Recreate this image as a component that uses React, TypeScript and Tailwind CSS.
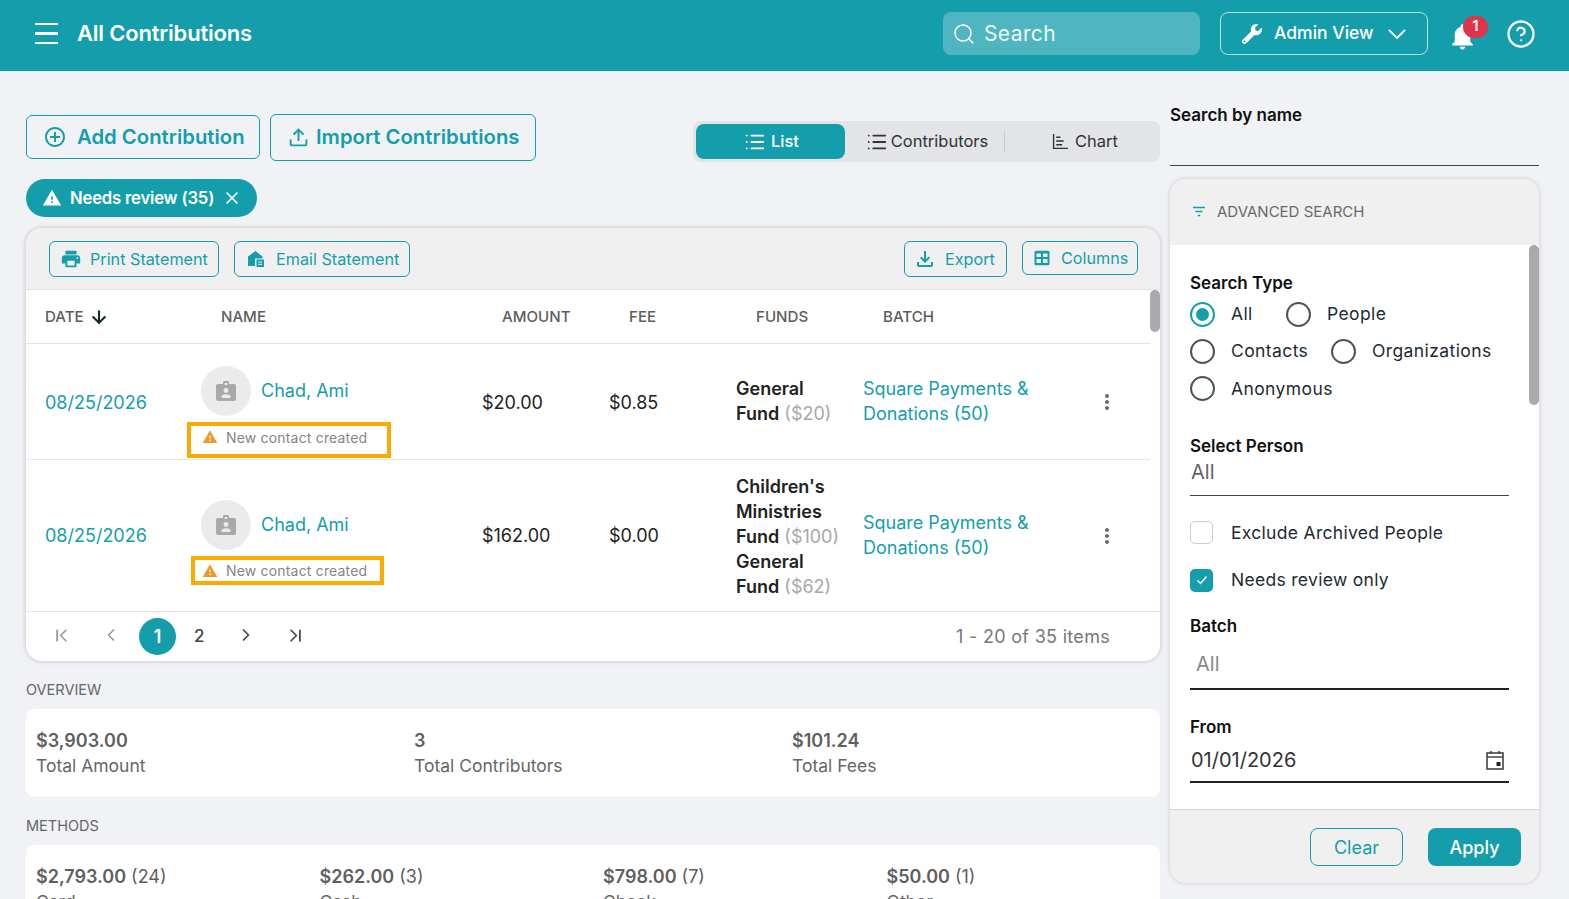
import React from 'react'
import { ArrowDown, ChevronFirst, ChevronLast, ChevronLeft, ChevronRight, CircleHelp, List, Search, Upload, X } from 'lucide-react'
import { FaWrench } from 'react-icons/fa'
import { MdAddCircleOutline, MdMoreVert, MdNotifications, MdOutlineFileDownload, MdPrint, MdWarning } from 'react-icons/md'

const teal = 'text-[#149eac]'

function ChartIcon() {
  return (
    <svg viewBox="0 0 16 16" className="h-[17px] w-[17px]" fill="none" stroke="currentColor" strokeWidth="1.3">
      <path d="M1.5 1V14.500h13.500M4 4h4M4 7.500h7M4 11h5.500" />
    </svg>
  )
}

function EmailIcon() {
  return (
    <svg viewBox="0 0 18 18" className="h-[18px] w-[18px]" fill="currentColor">
      <path d="M8.500 1 1 6.500V16h7V8.500h7.500V6.600Z" />
      <path fillRule="evenodd" d="M9.500 9.500H17V17H9.500Zm1.700 2v1h4v-1Zm0 2.200v1h4v-1Z" />
    </svg>
  )
}

function ColumnsIcon() {
  return (
    <svg viewBox="0 0 16 16" className="h-4 w-4" fill="currentColor">
      <path fillRule="evenodd" d="M2 .8h12a1.500 1.500 0 0 1 1.500 1.500v11.400a1.500 1.500 0 0 1-1.500 1.500H2a1.500 1.500 0 0 1-1.500-1.500V2.300A1.500 1.500 0 0 1 2 .8Zm.5 2.700v3.500h4.500V3.500Zm6.500 0v3.500h4.500V3.500Zm-6.500 5.500v4h4.500v-4Zm6.500 0v4h4.500v-4Z" />
    </svg>
  )
}

function FilterIcon() {
  return (
    <svg viewBox="0 0 14 12" className="h-3 w-[14px]" fill="none" stroke="currentColor" strokeWidth="1.4">
      <path d="M1 1.500h12M3.500 5.500h7M5.800 9.500h2.400" />
    </svg>
  )
}

function CalendarIcon() {
  return (
    <svg viewBox="0 0 18 20" className="h-5 w-[18px]" fill="none" stroke="#444" strokeWidth="1.6">
      <rect x="1" y="3" width="16" height="16" />
      <path d="M1 7h16M5 1v3M13 1v3" />
      <rect x="10.500" y="12" width="4" height="4" fill="#222" stroke="none" />
    </svg>
  )
}

function BadgeIcon() {
  return (
    <svg viewBox="0 0 20 20" className="h-5 w-5">
      <rect x="0" y="3" width="20" height="17" rx="2" fill="#a9a9a9" />
      <rect x="7" y="0" width="6" height="6" rx="1" fill="#a9a9a9" />
      <rect x="8.700" y="2" width="2.600" height="2" fill="#ebebeb" />
      <circle cx="10" cy="9.500" r="2.400" fill="#ebebeb" />
      <path d="M5.500 17v-1.500c0-1.500 2-2.300 4.500-2.300s4.500.8 4.500 2.300V17Z" fill="#ebebeb" />
    </svg>
  )
}

function OutlineButton({ icon, label, className }: { icon: React.ReactNode; label: string; className: string }) {
  return (
    <button className={`flex items-center border border-[#149eac] rounded-md text-[#149eac] ${className}`}>
      {icon}
      <span>{label}</span>
    </button>
  )
}

function Radio({ label, checked, className }: { label: string; checked?: boolean; className?: string }) {
  return (
    <label className={`flex items-center gap-[16px] ${className ?? ''}`}>
      <span className={`flex h-[25px] w-[25px] items-center justify-center rounded-full border-2 ${checked ? 'border-[#149eac]' : 'border-[#4b5559]'}`}>
        {checked && <span className="h-[13px] w-[13px] rounded-full bg-[#149eac]" />}
      </span>
      <span className="text-[17.5px] tracking-[0.4px] text-[#1c2b33]">{label}</span>
    </label>
  )
}

function Avatar() {
  return (
    <div className="flex h-[50px] w-[50px] items-center justify-center rounded-full bg-[#ebebeb]">
      <BadgeIcon />
    </div>
  )
}

function WarningBox({ className }: { className: string }) {
  return (
    <div className={`flex w-fit items-center border-4 border-[#fbab00] text-[#858585] ${className}`}>
      <MdWarning size={16} className="mr-[8px] text-[#ed9b2f]" />
      <span className="text-[14px] tracking-[0.18px]">New contact created</span>
    </div>
  )
}

function Row({ amount, fee, nameClass, boxClass, rowClass, textClass, batchClass, funds }: { amount: string; fee: string; nameClass: string; boxClass: string; rowClass: string; textClass: string; batchClass: string; funds: React.ReactNode }) {
  return (
    <div className={`relative mr-[10px] grid grid-cols-[156px_281px_127px_127px_127px_1fr] items-center pl-[19px] text-[18px] ${rowClass}`}>
      <div className="text-[#149eac]">08/25/2026</div>
      <div className={`self-start ${nameClass}`}>
        <div className="flex items-center gap-[10px]">
          <Avatar />
          <span className="mb-[2px] text-[#149eac]">Chad, Ami</span>
        </div>
        <WarningBox className={boxClass} />
      </div>
      <div className="text-[#222]">{amount}</div>
      <div className="text-[#222]">{fee}</div>
      <div className={`w-[108px] leading-[25px] text-[#222] ${textClass}`}>{funds}</div>
      <div className={`w-[185px] leading-[25px] text-[#149eac] ${batchClass}`}>Square Payments &amp; Donations (50)</div>
      <div className="absolute right-[31px]">
        <MdMoreVert size={24} className="text-[#6b6b6b]" />
      </div>
    </div>
  )
}

function Fund({ name, amount }: { name: string; amount: string }) {
  return (
    <div>
      <b className="font-semibold">{name}</b> <span className="text-[#a8a8a8]">{amount}</span>
    </div>
  )
}

function Stat({ value, count, label }: { value: string; count?: string; label: string }) {
  return (
    <div>
      <div className="text-[18px] leading-[26px] text-[#5f5f5f]">
        <span className="font-semibold">{value}</span>
        {count && <span> {count}</span>}
      </div>
      <div className="text-[17.5px] leading-[24px] text-[#666]">{label}</div>
    </div>
  )
}

export default function App() {
  return (
    <div className="h-[899px] overflow-hidden bg-[#f0f2f6] font-['Inter',sans-serif]">
      {/* top bar */}
      <header className="flex h-[71px] items-center bg-[#149eac] pb-[4px] pl-[35px] pr-[33px] text-white">
        <div className="flex w-[23px] flex-col gap-[7px]">
          <span className="h-[2.5px] bg-white" />
          <span className="h-[2.5px] bg-white" />
          <span className="h-[2.5px] bg-white" />
        </div>
        <h1 className="ml-[19px] text-[22px] font-semibold tracking-[-0.2px]">All Contributions</h1>
        <div className="ml-auto flex h-[43px] w-[257px] items-center gap-[8px] rounded-lg bg-[#4fb6c1] pl-[9px]">
          <Search size={24} strokeWidth={1.5} />
          <span className="mt-[1px] text-[21px] tracking-[0.4px] text-white/90">Search</span>
        </div>
        <button className="ml-[20px] flex h-[43px] w-[208px] items-center rounded-lg border border-white/70 pl-[21px]">
          <FaWrench size={20} />
          <span className="ml-[12px] text-[17.5px] font-medium">Admin View</span>
          <svg viewBox="0 0 18 10" className="ml-[14px] h-[10px] w-[18px]" fill="none" stroke="white" strokeWidth="1.8"><path d="M1 1l8 8 8-8" /></svg>
        </button>
        <div className="relative ml-[19px] h-[32px] w-[30px]">
          <MdNotifications size={31} className="mt-[3px]" />
          <span className="absolute -top-[2px] left-[16px] flex h-[22px] w-[25px] items-center justify-center rounded-full bg-[#e1334a] text-[15px] font-semibold">1</span>
        </div>
        <CircleHelp size={30} strokeWidth={1.8} className="ml-[29px]" />
      </header>

      <main className="flex pl-[26px] pr-[30px]">
        {/* left column */}
        <div className="w-[1134px]">
          <div className="flex items-start pt-[43px]">
            <OutlineButton icon={<MdAddCircleOutline size={24} className="mr-[10px]" />} label="Add Contribution" className="mt-[1px] h-[44px] w-[234px] pl-[16px] text-[20.3px] font-semibold" />
            <OutlineButton icon={<Upload size={21} strokeWidth={2.2} className="mr-[7px]" />} label="Import Contributions" className="ml-[10px] h-[47px] w-[266px] pl-[17px] text-[20.3px] font-semibold" />
            <div className="ml-auto mt-[7px] flex h-[41px] w-[467px] items-center rounded-lg bg-[#e2e4e8] pl-[3px] text-[16.5px] text-[#333]">
              <div className="flex h-[35px] w-[149px] items-center justify-center gap-[5px] rounded-lg bg-[#149eac] pl-[2px] font-medium text-white">
                <List size={22} strokeWidth={2} />
                List
              </div>
              <div className="flex h-[22px] w-[160px] items-center justify-center gap-[3px] border-r border-[#c9cbcf] pl-[5px]">
                <List size={22} strokeWidth={2} />
                Contributors
              </div>
              <div className="flex flex-1 items-center justify-center gap-[6px] pl-[5px]">
                <ChartIcon />
                Chart
              </div>
            </div>
          </div>

          <div className="mt-[17px] flex h-[38px] w-[231px] items-center rounded-full bg-[#149eac] pl-[16px] text-white">
            <MdWarning size={20} />
            <span className="ml-[8px] mt-[1px] text-[16.7px] font-semibold tracking-[-0.2px]">Needs review (35)</span>
            <X size={20} className="ml-[8px]" />
          </div>

          {/* contributions card */}
          <section className="relative mt-[11px] h-[433px] overflow-hidden rounded-2xl bg-white shadow-[0_0_5px_rgba(0,0,0,0.22)]">
            <div className="flex h-[62px] items-start border-b border-[#e2e2e2] bg-[#f0f0f0] pl-[23px] pr-[22px] pt-[13px] text-[16.2px]">
              <OutlineButton icon={<MdPrint size={22} className="mr-[8px]" />} label="Print Statement" className="h-[36px] w-[170px] pl-[10px]" />
              <OutlineButton icon={<span className="mr-[11px]"><EmailIcon /></span>} label="Email Statement" className="ml-[15px] h-[36px] w-[176px] pl-[12px]" />
              <OutlineButton icon={<MdOutlineFileDownload size={24} className="mr-[8px]" />} label="Export" className="ml-auto h-[36px] w-[103px] pl-[8px]" />
              <OutlineButton icon={<span className="mr-[11px]"><ColumnsIcon /></span>} label="Columns" className="ml-[15px] h-[34px] w-[116px] pl-[11px]" />
            </div>
            <div className="mr-[10px] grid h-[54px] grid-cols-[156px_281px_127px_127px_1fr] items-center border-b border-[#e2e2e2] pl-[19px] pt-[2px] text-[15.1px] font-medium text-[#5d5d5d]">
              <div className="flex items-center gap-[5px]">DATE <ArrowDown size={20} strokeWidth={2.5} className="text-[#12292e]" /></div>
              <div className="pl-[20px]">NAME</div>
              <div className="pl-[20px]">AMOUNT</div>
              <div className="pl-[20px]">FEE</div>
              <div className="flex">
                <span className="w-[127px] pl-[20px]">FUNDS</span>
                <span className="pl-[20px]">BATCH</span>
              </div>
            </div>
            <Row
              amount="$20.00"
              fee="$0.85"
              rowClass="h-[116px] border-b border-[#e6e6e6] pt-[2px]"
              textClass="mb-[4px]"
              batchClass="mb-[3px]"
              nameClass="pt-[20px]"
              boxClass="-ml-[14px] mt-[6px] h-[36px] pb-[6px] pl-[11px] pr-[20px]"
              funds={<Fund name="General Fund" amount="($20)" />}
            />
            <Row
              amount="$162.00"
              fee="$0.00"
              rowClass="h-[151px]"
              textClass="mt-[1px]"
              batchClass="mb-[1px]"
              nameClass="pt-[40px]"
              boxClass="-ml-[10px] mt-[6px] h-[29px] pl-[7px] pr-[13px]"
              funds={
                <>
                  <Fund name="Children's Ministries Fund" amount="($100)" />
                  <Fund name="General Fund" amount="($62)" />
                </>
              }
            />
            <div className="flex h-[50px] items-center border-t border-[#e2e2e2] pl-[25px] pr-[50px] text-[#444]">
              <ChevronFirst size={21} className="mb-[3px] text-[#999]" />
              <ChevronLeft size={20} className="mb-[3px] ml-[29px] text-[#999]" />
              <span className="ml-[18px] flex h-[37px] w-[37px] items-center justify-center rounded-full bg-[#149eac] text-[18px] font-semibold text-white">1</span>
              <span className="ml-[18px] text-[17px] font-medium">2</span>
              <ChevronRight size={20} className="mb-[3px] ml-[32px]" />
              <ChevronLast size={21} className="mb-[3px] ml-[29px]" />
              <span className="ml-auto text-[18px] tracking-[0.3px] text-[#777]">1 - 20 of 35 items</span>
            </div>
            <span className="absolute right-0 top-[62px] h-[42px] w-[10px] rounded-full bg-[#aaa]" />
          </section>

          <div className="mt-[20px] text-[14.5px] leading-[18px] text-[#666]">OVERVIEW</div>
          <div className="mt-[10px] grid h-[88px] grid-cols-[378px_378px_1fr] content-center rounded-lg bg-white pl-[10px]">
            <Stat value="$3,903.00" label="Total Amount" />
            <Stat value="3" label="Total Contributors" />
            <Stat value="$101.24" label="Total Fees" />
          </div>
          <div className="mt-[20px] text-[14.5px] leading-[18px] text-[#666]">METHODS</div>
          <div className="mt-[10px] grid h-[88px] grid-cols-[283.5px_283.5px_283.5px_1fr] content-center rounded-lg bg-white pl-[10px]">
            <Stat value="$2,793.00" count="(24)" label="Card" />
            <Stat value="$262.00" count="(3)" label="Cash" />
            <Stat value="$798.00" count="(7)" label="Check" />
            <Stat value="$50.00" count="(1)" label="Other" />
          </div>
        </div>

        {/* right column */}
        <aside className="ml-[10px] w-[369px]">
          <div className="h-[95px] border-b border-[#3f484d] pt-[33px] text-[17px] font-semibold leading-[22px] text-[#111]">Search by name</div>
          <div className="relative mt-[13px] flex h-[704px] flex-col overflow-hidden rounded-2xl bg-white shadow-[0_0_5px_rgba(0,0,0,0.18)]">
            <div className="flex h-[66px] items-center gap-[11px] bg-[#f0f0f0] pl-[22px] text-[15px] text-[#6a6a6a]">
              <span className={teal}><FilterIcon /></span>
              ADVANCED SEARCH
            </div>
            <div className="flex-1 pl-[20px] pr-[30px] pt-[27px]">
              <div className="text-[17px] font-semibold leading-[22px] text-[#111]">Search Type</div>
              <div className="mt-[7px] flex">
                <Radio label="All" checked className="w-[96px]" />
                <Radio label="People" />
              </div>
              <div className="mt-[11px] flex">
                <Radio label="Contacts" className="w-[141px]" />
                <Radio label="Organizations" />
              </div>
              <div className="mt-[11px] flex">
                <Radio label="Anonymous" />
              </div>

              <div className="mt-[33px] text-[17px] font-semibold leading-[22px] text-[#111]">Select Person</div>
              <div className="h-[39px] border-b border-[#3f484d] pl-[1px] text-[20px] text-[#5d6569]">All</div>

              <div className="mt-[24px] flex items-center gap-[18px]">
                <span className="h-[23px] w-[23px] rounded-[5px] border border-[#ccc] bg-white" />
                <span className="text-[17.5px] tracking-[0.3px] text-[#1c2b33]">Exclude Archived People</span>
              </div>
              <div className="mt-[21px] flex items-center gap-[18px]">
                <span className="flex h-[23px] w-[23px] items-center justify-center rounded-[5px] bg-[#149eac]">
                  <svg viewBox="0 0 12 12" className="h-3 w-3" fill="none" stroke="white" strokeWidth="1.5"><path d="M1.500 6.500 4.500 9.500 10.500 2.500" /></svg>
                </span>
                <span className="text-[17.5px] tracking-[0.3px] text-[#1c2b33]">Needs review only</span>
              </div>

              <div className="mt-[22px] text-[17px] font-semibold leading-[22px] text-[#111]">Batch</div>
              <div className="mt-[5px] h-[48px] border-b-2 border-[#222] pl-[6px] pt-[7px] text-[20px] text-[#888]">All</div>

              <div className="mt-[26px] text-[17px] font-semibold leading-[22px] text-[#111]">From</div>
              <div className="flex h-[45px] items-center justify-between border-b-2 border-[#222] pl-[1px] pr-[5px] text-[20px] text-[#333]">
                01/01/2026
                <CalendarIcon />
              </div>
            </div>
            <div className="flex h-[74px] items-start justify-end gap-[25px] border-t border-[#d6d6d6] bg-[#f0f0f0] pr-[18px] pt-[18px] text-[18px]">
              <button className="h-[38px] w-[93px] rounded-lg border border-[#149eac] text-[#149eac]">Clear</button>
              <button className="h-[38px] w-[93px] rounded-lg bg-[#149eac] font-medium text-white">Apply</button>
            </div>
            <span className="absolute right-0 top-[66px] h-[160px] w-[10px] rounded-full bg-[#aaa]" />
          </div>
        </aside>
      </main>
    </div>
  )
}
